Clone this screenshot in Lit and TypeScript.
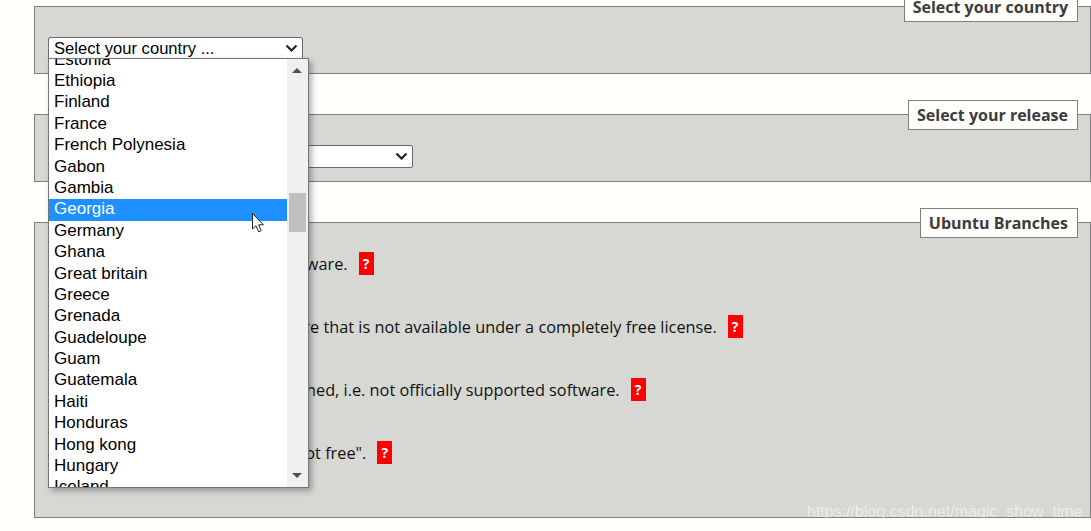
import { LitElement, html, css, svg } from 'lit';
import { customElement } from 'lit/decorators.js';

const COUNTRIES = [
  'Estonia', 'Ethiopia', 'Finland', 'France', 'French Polynesia', 'Gabon', 'Gambia', 'Georgia',
  'Germany', 'Ghana', 'Great britain', 'Greece', 'Grenada', 'Guadeloupe', 'Guam', 'Guatemala',
  'Haiti', 'Honduras', 'Hong kong', 'Hungary', 'Iceland',
];

const BRANCHES = [
  'Main - Officially supported software.',
  'Restricted - Proprietary software that is not available under a completely free license.',
  'Universe – Community maintained, i.e. not officially supported software.',
  'Multiverse - Software that is "not free".',
];

const chevron = svg`<path d="M1.5 1.5 L6.5 6.5 L11.5 1.5" fill="none" stroke="#222" stroke-width="2.2"/>`;

@customElement('app-root')
export class AppRoot extends LitElement {
  static styles = css`
    :host {
      display: block;
      position: relative;
      height: 531px;
      overflow: hidden;
      background: #fffffb;
      font-family: 'Open Sans', sans-serif;
      color: #111;
    }

    .page {
      display: flex;
      flex-direction: column;
      gap: 26px;
      margin-top: -8.5px;
      padding-left: 34px;
    }

    fieldset {
      margin: 0;
      padding: 0 12px 0 13px;
      min-width: 0;
      border: 1px solid #7f7f7f;
      background: #d7d8d4;
      box-sizing: border-box;
    }

    legend {
      margin-left: auto;
      padding: 0 9px 0 8px;
      height: 30px;
      box-sizing: border-box;
      border: 1px solid #7f7f7f;
      background: #fffffb;
      color: #3c3c3c;
      font-size: 16px;
      font-weight: 700;
      line-height: 28px;
      white-space: nowrap;
    }

    .select-panel {
      height: 82px;
      padding-top: 15px;
    }

    .fake-select {
      display: flex;
      align-items: center;
      justify-content: space-between;
      box-sizing: border-box;
      height: 23px;
      padding: 0 4px 0 5px;
      border: 1px solid #6b6b6b;
      border-radius: 2px;
      background: #fff;
      color: #000;
      font-family: 'Liberation Sans', sans-serif;
      font-size: 16.6px;
    }

    .fake-select span {
      padding-top: 2px;
    }

    .country { width: 255px; }
    .release { width: 365px; }

    .branches {
      height: 310px;
      padding-top: 14px;
    }

    .rows {
      display: flex;
      flex-direction: column;
      gap: 40px;
    }

    .branch {
      display: flex;
      align-items: center;
      height: 23px;
      font-size: 16.3px;
    }

    .branch input {
      margin: 0 8px 0 4px;
    }

    .label {
      padding-top: 2px;
    }

    .help {
      width: 15px;
      height: 23px;
      margin-left: 11px;
      background: #f00;
      color: #fff;
      font-size: 14px;
      font-weight: 700;
      line-height: 23px;
      text-align: center;
    }

    .popup {
      position: absolute;
      left: 48px;
      top: 58px;
      width: 261px;
      height: 430px;
      box-sizing: border-box;
      display: flex;
      border: 1px solid #767676;
      background: #fff;
      box-shadow: 3px 3px 6px rgba(0, 0, 0, 0.3);
      font-family: 'Liberation Sans', sans-serif;
      font-size: 17px;
      color: #000;
    }

    .list {
      flex: 1;
      overflow: hidden;
    }

    .option {
      height: 21.4px;
      line-height: 19.4px;
      padding-left: 5px;
      white-space: nowrap;
    }

    .list .option:first-child {
      margin-top: -9.4px;
    }

    .option.on {
      background: #1e90ff;
      color: #fff;
    }

    .scrollbar {
      position: relative;
      width: 21px;
      background: #f0f0f0;
    }

    .thumb {
      position: absolute;
      left: 2px;
      right: 2px;
      top: 134px;
      height: 39px;
      background: #c0c0c0;
    }

    .arrow {
      position: absolute;
      left: 5px;
      width: 0;
      height: 0;
      border-left: 5px solid transparent;
      border-right: 5px solid transparent;
    }

    .arrow.up { top: 9px; border-bottom: 5px solid #505050; }
    .arrow.down { bottom: 9px; border-top: 5px solid #505050; }

    .cursor {
      position: absolute;
      left: 252px;
      top: 213px;
    }

    .watermark {
      position: absolute;
      left: 807px;
      top: 502px;
      color: rgba(255, 255, 255, 0.5);
      font-family: 'Liberation Sans', sans-serif;
      font-size: 16px;
      line-height: 20px;
      white-space: nowrap;
      filter: blur(0.4px);
    }
  `;

  render() {
    return html`
      <div class="page">
        <fieldset class="select-panel">
          <legend>Select your country</legend>
          <div class="fake-select country">
            <span>Select your country ...</span>
            <svg width="13" height="8" viewBox="0 0 13 8">${chevron}</svg>
          </div>
        </fieldset>
        <fieldset class="select-panel">
          <legend>Select your release</legend>
          <div class="fake-select release">
            <span>Ubuntu 18.04 LTS</span>
            <svg width="13" height="8" viewBox="0 0 13 8">${chevron}</svg>
          </div>
        </fieldset>
        <fieldset class="branches">
          <legend>Ubuntu Branches</legend>
          <div class="rows">
            ${BRANCHES.map(
              (text) => html`
                <div class="branch">
                  <input type="checkbox" />
                  <span class="label">${text}</span>
                  <span class="help">?</span>
                </div>
              `,
            )}
          </div>
        </fieldset>
      </div>

      <div class="popup">
        <div class="list">
          ${COUNTRIES.map(
            (name) => html`<div class="option ${name === 'Georgia' ? 'on' : ''}">${name}</div>`,
          )}
        </div>
        <div class="scrollbar">
          <div class="arrow up"></div>
          <div class="thumb"></div>
          <div class="arrow down"></div>
        </div>
      </div>

      <svg class="cursor" width="14" height="20" viewBox="0 0 14 20">
        <path
          d="M0.5 0.5 V16 L4 12.7 L6.6 18.8 L9.2 17.7 L6.6 11.8 H11.4 Z"
          fill="#fff"
          stroke="#222"
          stroke-width="1"
        />
      </svg>

      <div class="watermark">https://blog.csdn.net/magic_show_time</div>
    `;
  }
}
